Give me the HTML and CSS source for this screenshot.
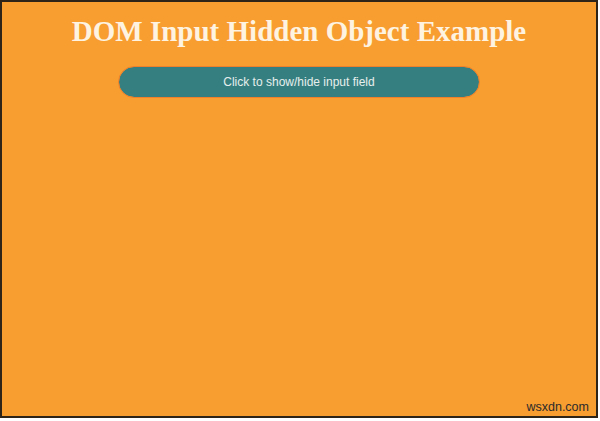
FILE: index.html
```html
<!DOCTYPE html>
<html>
<head>
<meta charset="utf-8">
<link rel="stylesheet" href="styles.css">
</head>
<body>
<div class="frame">
  <h1 class="title">DOM Input Hidden Object Example</h1>
  <div class="btn-row">
    <button class="toggle">Click to show/hide input field</button>
  </div>
  <div class="spacer"></div>
  <div class="watermark">wsxdn.com</div>
</div>
</body>
</html>
```
FILE: styles.css
```css
html, body {
  margin: 0;
  padding: 0;
  background: #ffffff;
}
.frame {
  box-sizing: border-box;
  width: 598px;
  height: 418px;
  border: 2px solid #2e2418;
  background: #f89d30;
  display: flex;
  flex-direction: column;
  align-items: center;
}
.title {
  margin: 12px 0 0 0;
  font-family: "Liberation Serif", "Times New Roman", serif;
  font-weight: bold;
  font-size: 29px;
  line-height: 34px;
  color: #fdf3e0;
  text-align: center;
}
.btn-row {
  margin-top: 19px;
  display: flex;
  justify-content: center;
}
.toggle {
  width: 360px;
  height: 30px;
  border: none;
  border-radius: 15px;
  background: #367f80;
  color: #e6efed;
  font-family: "Liberation Sans", Arial, sans-serif;
  font-size: 12px;
  outline: 1px solid #f0812a;
  outline-offset: 0;
  padding: 0;
}
.spacer {
  flex: 1;
}
.watermark {
  align-self: flex-end;
  margin: 0 7px 2px 0;
  font-family: "Liberation Sans", Arial, sans-serif;
  font-size: 12.5px;
  color: #2b2b2b;
}
```
